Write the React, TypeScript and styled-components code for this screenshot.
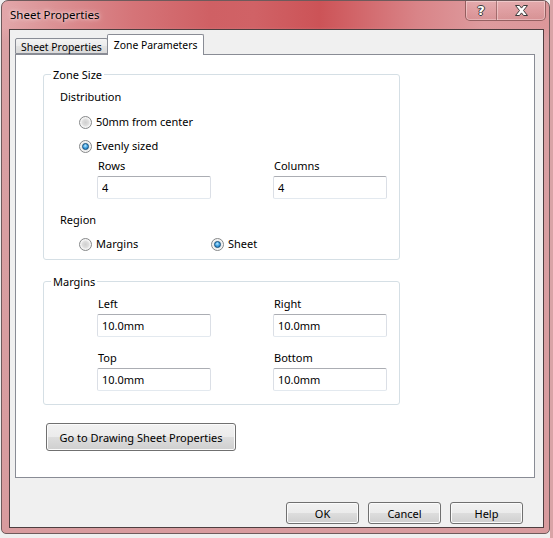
import React, { useState } from 'react';
import styled, { createGlobalStyle } from 'styled-components';

const GlobalStyle = createGlobalStyle`
  html, body {
    margin: 0;
    padding: 0;
    background: #efefef;
  }
  body {
    font-family: "Segoe UI", "Noto Sans", "Open Sans", sans-serif;
    font-size: 11px;
    color: #000;
  }
`;

const Screen = styled.div`
  width: 553px;
  height: 538px;
  overflow: hidden;
  background: linear-gradient(to right, #efefef 0, #efefef 550px, #d9a3a6 550px);
`;

// Aero-like window frame, red glass tint
const Window = styled.div`
  margin-left: 1px;
  width: 549px;
  height: 534px;
  box-sizing: border-box;
  border: 1px solid #6f5a5b;
  border-radius: 7px 7px 5px 5px;
  display: flex;
  flex-direction: column;
  background:
    linear-gradient(to bottom, rgba(218, 160, 163, 0) 0px, rgba(218, 160, 163, 0) 26px, #d9a0a3 40px, #d89b9e 100%),
    linear-gradient(to right, #e2a7aa 0%, #db9093 10%, #d57478 24%, #cf6064 38%, #d06266 46%, #cc5357 58%, #d16367 64%, #d98488 76%, #de9b9e 88%, #dc979a 100%);
  padding: 0 5px 5px 7px;
`;

const TitleBar = styled.div`
  height: 28px;
  display: flex;
  align-items: flex-start;
`;

const Title = styled.div`
  padding: 6px 0 0 1px;
  line-height: 16px;
  font-size: 11.5px;
  color: #000;
  text-shadow: 0 0 6px rgba(255, 235, 235, 0.9), 0 0 3px rgba(255, 240, 240, 0.8);
`;

const CaptionButtons = styled.div`
  margin-left: auto;
  margin-right: -2px;
  display: flex;
  height: 19px;
  border: 1px solid rgba(90, 50, 50, 0.55);
  border-top: none;
  border-radius: 0 0 5px 5px;
  box-shadow: inset 0 0 0 1px rgba(255, 230, 230, 0.45);
  overflow: hidden;
`;

const CaptionButton = styled.div<{ $width: number }>`
  width: ${(p) => p.$width}px;
  height: 100%;
  display: flex;
  align-items: center;
  justify-content: center;
  background: linear-gradient(to bottom, rgba(255, 255, 255, 0.18), rgba(255, 255, 255, 0.05) 50%, rgba(120, 40, 40, 0.06));
  & + & {
    border-left: 1px solid rgba(90, 50, 50, 0.45);
    box-shadow: inset 1px 0 0 rgba(255, 230, 230, 0.45);
  }
`;

const HelpGlyph = styled.span`
  font-family: "DejaVu Sans", sans-serif;
  font-weight: bold;
  font-size: 13px;
  line-height: 13px;
  color: #fff;
  text-shadow: -1px 0 #3c3c3c, 1px 0 #3c3c3c, 0 -1px #3c3c3c, 0 1px #3c3c3c;
`;

const Client = styled.div`
  flex: 1;
  display: flex;
  flex-direction: column;
  background: #f0f0f0;
  border: 1px solid #4e3e40;
  padding: 5px 8px 3px 5px;
`;

const TabStrip = styled.div`
  display: flex;
  align-items: flex-end;
  height: 20px;
  margin-bottom: -1px;
  position: relative;
  z-index: 1;
`;

const Tab = styled.div<{ $active?: boolean }>`
  box-sizing: border-box;
  height: ${(p) => (p.$active ? 21 : 16)}px;
  padding: ${(p) => (p.$active ? '1px 6px 0' : '1px 5px 0')};
  margin-left: ${(p) => (p.$active ? -1 : 0)}px;
  margin-bottom: ${(p) => (p.$active ? 0 : 1)}px;
  border: 1px solid #898c95;
  border-bottom: ${(p) => (p.$active ? 'none' : '1px solid #898c95')};
  border-radius: 2px 2px 0 0;
  font-size: 10.4px;
  line-height: ${(p) => (p.$active ? 18 : 14)}px;
  background: ${(p) =>
    p.$active ? '#fff' : 'linear-gradient(to bottom, #f3f3f3 0%, #ebebeb 50%, #e2e2e2 51%, #dadada 100%)'};
  white-space: nowrap;
  cursor: default;
`;

const Panel = styled.div`
  flex: 1;
  background: #fff;
  border: 1px solid #898c95;
  padding: 19px 0 0 27px;
  display: flex;
  flex-direction: column;
  align-items: flex-start;
`;

const GroupBox = styled.div<{ $bottom?: number }>`
  position: relative;
  width: 357px;
  box-sizing: border-box;
  border: 1px solid #d5dfe5;
  border-radius: 3px;
  padding: 14px 0 ${(p) => p.$bottom ?? 3}px 16px;
  & + & {
    margin-top: 21px;
  }
`;

const GroupTitle = styled.span`
  position: absolute;
  top: -8px;
  left: 7px;
  padding: 0 2px;
  background: #fff;
  line-height: 16px;
`;

const SubHeading = styled.div<{ $gap?: number }>`
  line-height: 16px;
  margin-top: ${(p) => p.$gap ?? 0}px;
`;

const RadioRow = styled.div<{ $gap?: number }>`
  display: flex;
  align-items: center;
  height: 24px;
  padding-left: 19px;
  margin-top: ${(p) => p.$gap ?? 0}px;
`;

const RadioLabel = styled.label<{ $width?: number }>`
  display: flex;
  align-items: center;
  gap: 4px;
  width: ${(p) => (p.$width ? `${p.$width}px` : 'auto')};
  line-height: 16px;
  cursor: default;
`;

const RadioCircle = styled.span<{ $checked?: boolean }>`
  width: 13px;
  height: 13px;
  box-sizing: border-box;
  border-radius: 50%;
  border: 1px solid #868889;
  background: radial-gradient(circle at 50% 50%, #cfcfcf 0%, #dedede 40%, #f6f6f6 62%, #e6e6e6 100%);
  display: flex;
  align-items: center;
  justify-content: center;
  flex: none;
  margin-top: 1px;
  &::after {
    content: '';
    width: 7px;
    height: 7px;
    box-sizing: border-box;
    border-radius: 50%;
    display: ${(p) => (p.$checked ? 'block' : 'none')};
    border: 1px solid #13507f;
    background: radial-gradient(circle at 45% 35%, #bfeaff 0%, #4ba9e6 45%, #136cb3 100%);
  }
`;

const FieldGrid = styled.div`
  display: grid;
  grid-template-columns: 114px 114px;
  column-gap: 62px;
  row-gap: 13px;
  margin-left: 37px;
`;

const Field = styled.div`
  display: flex;
  flex-direction: column;
  gap: 2px;
`;

const FieldLabel = styled.span`
  line-height: 16px;
  padding-left: 1px;
`;

const TextBox = styled.input`
  box-sizing: border-box;
  width: 114px;
  height: 23px;
  margin: 0;
  padding: 0 0 0 4px;
  font: inherit;
  color: #000;
  border: 1px solid #e3e9ef;
  border-top-color: #abadb3;
  border-left-color: #dbdfe6;
  border-right-color: #dbdfe6;
  border-radius: 2px;
  background: #fff;
  outline: none;
`;

const PushButton = styled.button<{ $width?: number; $height?: number }>`
  box-sizing: border-box;
  width: ${(p) => p.$width ?? 73}px;
  height: ${(p) => p.$height ?? 22}px;
  margin: 0;
  padding: 0;
  font: inherit;
  color: #000;
  border: 1px solid #707070;
  border-radius: 3px;
  background: linear-gradient(to bottom, #f2f2f2 0%, #ebebeb 50%, #dddddd 51%, #cfcfcf 100%);
  box-shadow: inset 0 0 0 1px #fbfbfb;
  cursor: default;
`;

const LinkButtonRow = styled.div`
  margin: 18px 0 0 3px;
`;

const Footer = styled.div`
  display: flex;
  justify-content: flex-end;
  gap: 9px;
  margin-top: 24px;
  padding-right: 12px;
`;

const CloseIcon = () => (
  <svg width="15" height="13" viewBox="0 0 15 13">
    <path
      d="M1.5 1.5h4l2 2.6 2-2.6h4l-4 5 4 5h-4l-2-2.6-2 2.6h-4l4-5z"
      fill="#fff"
      stroke="#3a3a3a"
      strokeWidth="1"
      strokeLinejoin="round"
    />
  </svg>
);

const Radio: React.FC<{ label: string; checked: boolean; width?: number; onSelect: () => void }> = ({
  label,
  checked,
  width,
  onSelect,
}) => (
  <RadioLabel $width={width} onClick={onSelect}>
    <RadioCircle $checked={checked} />
    {label}
  </RadioLabel>
);

const App: React.FC = () => {
  const [distribution, setDistribution] = useState<'center' | 'even'>('even');
  const [region, setRegion] = useState<'margins' | 'sheet'>('sheet');
  const [rows, setRows] = useState('4');
  const [columns, setColumns] = useState('4');
  const [margins, setMargins] = useState({ left: '10.0mm', right: '10.0mm', top: '10.0mm', bottom: '10.0mm' });

  return (
    <Screen>
      <GlobalStyle />
      <Window>
        <TitleBar>
          <Title>Sheet Properties</Title>
          <CaptionButtons>
            <CaptionButton $width={30}>
              <HelpGlyph>?</HelpGlyph>
            </CaptionButton>
            <CaptionButton $width={48}>
              <CloseIcon />
            </CaptionButton>
          </CaptionButtons>
        </TitleBar>

        <Client>
          <TabStrip>
            <Tab>Sheet Properties</Tab>
            <Tab $active>Zone Parameters</Tab>
          </TabStrip>

          <Panel>
            <GroupBox>
              <GroupTitle>Zone Size</GroupTitle>
              <SubHeading>Distribution</SubHeading>
              <RadioRow $gap={5}>
                <Radio label="50mm from center" checked={distribution === 'center'} onSelect={() => setDistribution('center')} />
              </RadioRow>
              <RadioRow>
                <Radio label="Evenly sized" checked={distribution === 'even'} onSelect={() => setDistribution('even')} />
              </RadioRow>
              <FieldGrid>
                <Field>
                  <FieldLabel>Rows</FieldLabel>
                  <TextBox value={rows} onChange={(e) => setRows(e.target.value)} />
                </Field>
                <Field>
                  <FieldLabel>Columns</FieldLabel>
                  <TextBox value={columns} onChange={(e) => setColumns(e.target.value)} />
                </Field>
              </FieldGrid>
              <SubHeading $gap={13}>Region</SubHeading>
              <RadioRow $gap={4}>
                <Radio label="Margins" width={132} checked={region === 'margins'} onSelect={() => setRegion('margins')} />
                <Radio label="Sheet" checked={region === 'sheet'} onSelect={() => setRegion('sheet')} />
              </RadioRow>
            </GroupBox>

            <GroupBox $bottom={13}>
              <GroupTitle>Margins</GroupTitle>
              <FieldGrid>
                {(['left', 'right', 'top', 'bottom'] as const).map((k) => (
                  <Field key={k}>
                    <FieldLabel>{k[0].toUpperCase() + k.slice(1)}</FieldLabel>
                    <TextBox value={margins[k]} onChange={(e) => setMargins({ ...margins, [k]: e.target.value })} />
                  </Field>
                ))}
              </FieldGrid>
            </GroupBox>

            <LinkButtonRow>
              <PushButton $width={190} $height={28}>Go to Drawing Sheet Properties</PushButton>
            </LinkButtonRow>
          </Panel>

          <Footer>
            <PushButton>OK</PushButton>
            <PushButton>Cancel</PushButton>
            <PushButton>Help</PushButton>
          </Footer>
        </Client>
      </Window>
    </Screen>
  );
};

export default App;
